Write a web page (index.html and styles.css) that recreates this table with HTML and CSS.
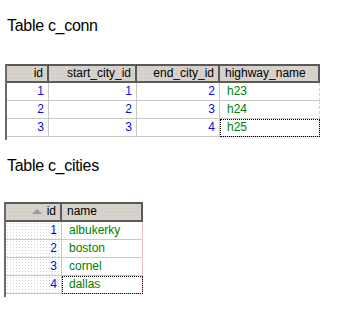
FILE: index.html
```html
<!DOCTYPE html>
<html>
<head>
<meta charset="utf-8">
<link rel="stylesheet" href="styles.css">
</head>
<body>
<div class="page">
  <h1 class="title t1">Table c_conn</h1>
  <div class="grid conn">
    <div class="hd num">id</div>
    <div class="hd num">start_city_id</div>
    <div class="hd num">end_city_id</div>
    <div class="hd txt">highway_name</div>

    <div class="cell num">1</div>
    <div class="cell num">1</div>
    <div class="cell num">2</div>
    <div class="cell txt last">h23</div>

    <div class="cell num">2</div>
    <div class="cell num">2</div>
    <div class="cell num">3</div>
    <div class="cell txt last">h24</div>

    <div class="cell num">3</div>
    <div class="cell num">3</div>
    <div class="cell num">4</div>
    <div class="cell txt last focus">h25</div>
    <div class="tail"></div>
  </div>

  <h1 class="title t2">Table c_cities</h1>
  <div class="grid cities">
    <div class="hd num sort"><span class="tri"></span>id</div>
    <div class="hd txt">name</div>

    <div class="cell num fixed">1</div>
    <div class="cell txt last">albukerky</div>

    <div class="cell num fixed">2</div>
    <div class="cell txt last">boston</div>

    <div class="cell num fixed">3</div>
    <div class="cell txt last">cornel</div>

    <div class="cell num fixed">4</div>
    <div class="cell txt last focus">dallas</div>
    <div class="tail"></div>
  </div>
</div>
</body>
</html>
```
FILE: styles.css
```css
html, body {
  margin: 0;
  padding: 0;
  background: #ffffff;
}
.page {
  width: 337px;
  height: 310px;
  overflow: hidden;
  font-family: "Liberation Sans", Arial, sans-serif;
}
.title {
  margin: 0;
  font-weight: normal;
  font-size: 16px;
  line-height: 18px;
  color: #000;
  letter-spacing: -0.3px;
}
.t1 {
  padding: 17px 0 0 7px;
  height: 47px;
}
.t2 {
  padding: 0 0 0 7px;
  margin-top: 17px;
  height: 26px;
}
.grid {
  display: grid;
  font-size: 12px;
  border-left: 2px solid #6a6a6a;
}
.conn {
  margin-left: 5px;
  grid-template-columns: 42px 88px 83px 100px;
  grid-template-rows: 19px 18px 18px 18px 3px;
  width: 313px;
}
.cities {
  margin-left: 4px;
  margin-top: 19px;
  grid-template-columns: 56px 81px;
  grid-template-rows: 20px 18px 18px 18px 18px 3px;
  width: 137px;
}
.hd {
  box-sizing: border-box;
  border-top: 2px solid #5a5a5a;
  border-bottom: 2px solid #5a5a5a;
  border-right: 2px solid #5a5a5a;
  background-color: #d4d0cc;
  background-image:
    radial-gradient(circle, #f2eeb4 0.55px, transparent 0.75px),
    radial-gradient(circle, #e8c4c8 0.55px, transparent 0.75px);
  background-size: 4px 4px, 4px 4px;
  background-position: 0 0, 2px 2px;
  color: #000;
  line-height: 15px;
  white-space: nowrap;
}
.hd.num {
  text-align: right;
  padding-right: 4px;
}
.hd.txt {
  padding-left: 5px;
}
.cell {
  box-sizing: border-box;
  border-right: 1px solid #c8c8c8;
  border-bottom: 1px solid #c8c8c8;
  line-height: 17px;
  white-space: nowrap;
}
.cell.num {
  text-align: right;
  padding-right: 4px;
  color: #0a0ae6;
}
.cell.txt {
  padding-left: 7px;
  color: #008000;
}
.cell.last {
  border-right: 1px dashed #d8d8a0;
}
.cities .cell.last {
  border-right: 1px solid #f0c4c4;
}
.cell.focus {
  outline: 1px dotted #000;
  outline-offset: -1px;
}
.fixed {
  background-image: radial-gradient(circle, #d4d4d4 0.5px, transparent 0.7px);
  background-size: 3px 3px;
}
.sort {
  position: relative;
}
.tri {
  position: absolute;
  left: 26px;
  top: 5px;
  width: 0;
  height: 0;
  border-left: 5px solid transparent;
  border-right: 5px solid transparent;
  border-bottom: 5px solid #9a9a9a;
}
.tail {
  grid-column: 1 / -1;
}
```
